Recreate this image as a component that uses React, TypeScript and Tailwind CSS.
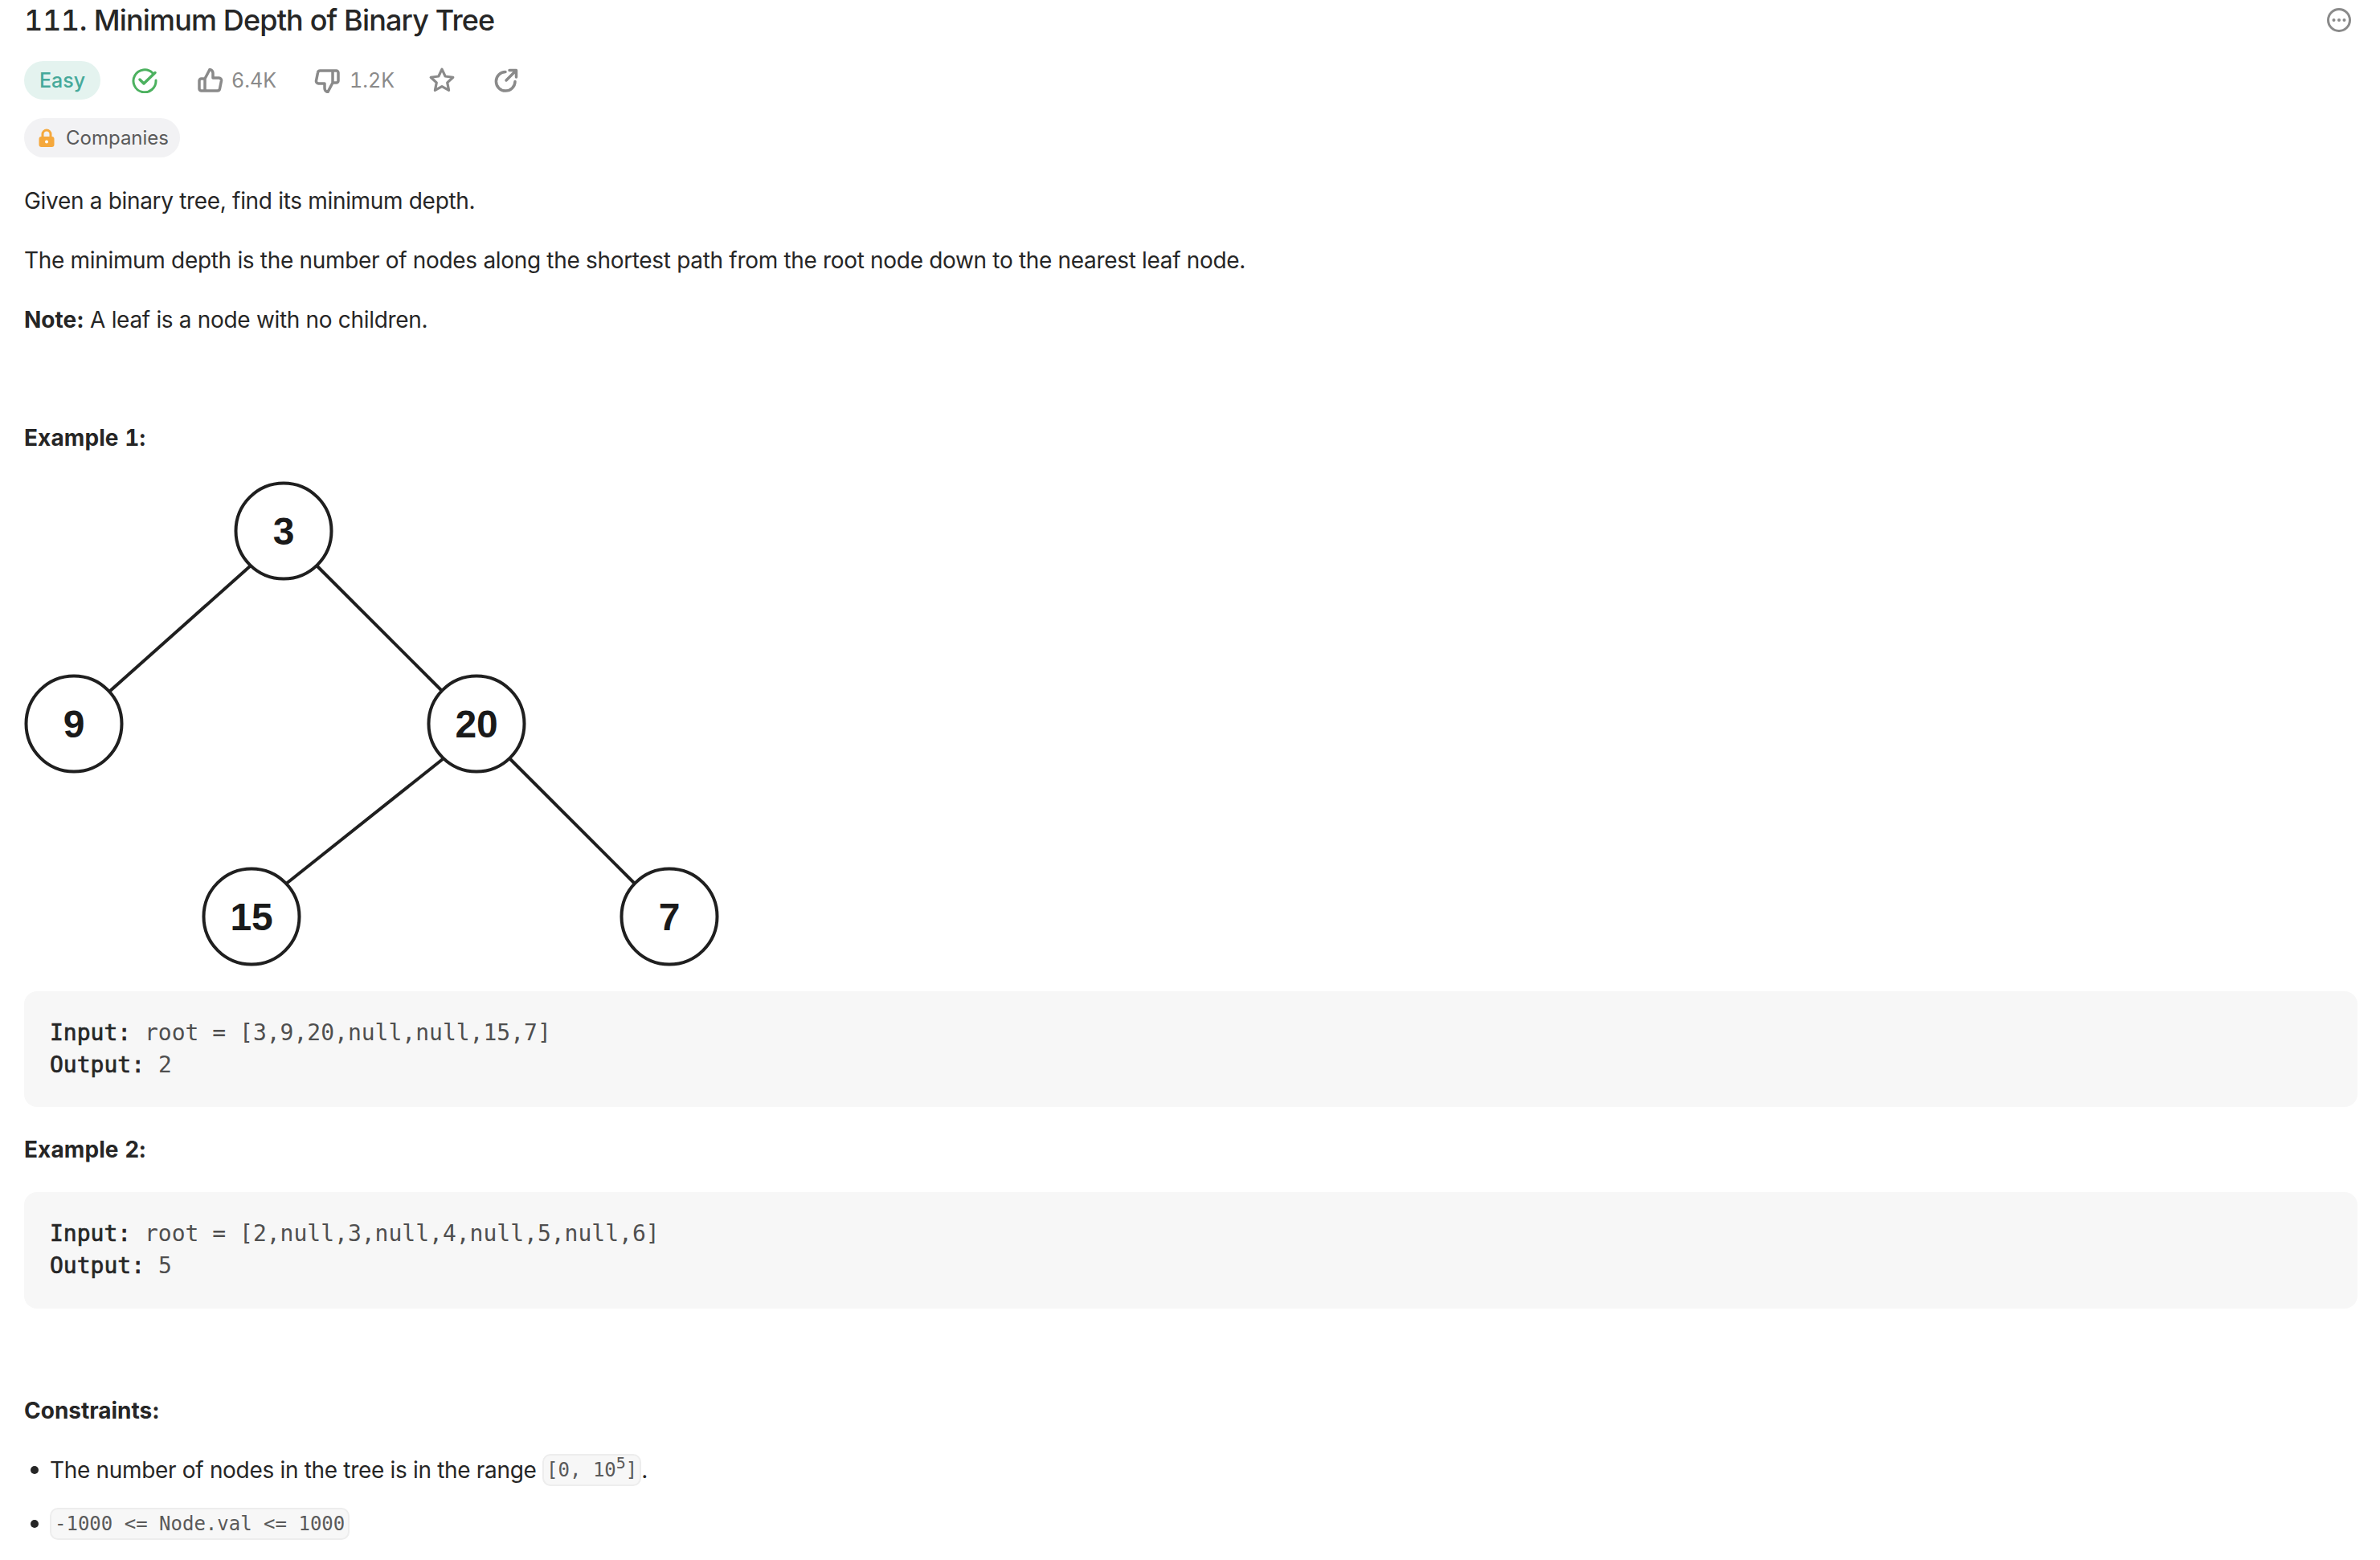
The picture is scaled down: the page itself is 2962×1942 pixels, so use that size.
import React from "react";

const sans = "font-['Inter','Noto_Sans',sans-serif]";

function Code({ label, value }: { label: string; value: string }) {
  return (
    <div>
      <span className="font-normal text-[#262626] [-webkit-text-stroke:0.7px_#262626]">{label}</span>
      <span> {value}</span>
    </div>
  );
}

function Pre({ lines, cls }: { lines: [string, string][]; cls: string }) {
  return (
    <div className={`rounded-[16px] bg-[#f7f7f7] px-[32px] text-[28px] leading-[40px] tracking-normal text-[#4f4f4f] font-['DejaVu_Sans_Mono',monospace] ${cls}`}>
      {lines.map(([a, b]) => (
        <Code key={a} label={a} value={b} />
      ))}
    </div>
  );
}

function Tree() {
  const nodes: [number, number, string][] = [
    [323, 62, "3"],
    [62, 302, "9"],
    [563, 302, "20"],
    [283, 542, "15"],
    [803, 542, "7"],
  ];
  return (
    <svg width="865" height="604" viewBox="0 0 865 604" className="block">
      <g stroke="#1f1f1f" strokeWidth="4" fill="none">
        <line x1="281" y1="106" x2="106" y2="262" />
        <line x1="365" y1="106" x2="521" y2="262" />
        <line x1="521" y1="346" x2="325" y2="502" />
        <line x1="605" y1="346" x2="761" y2="502" />
        {nodes.map(([x, y]) => (
          <circle key={`${x}-${y}`} cx={x} cy={y} r="59.500" fill="#fff" />
        ))}
      </g>
      {nodes.map(([x, y, t]) => (
        <text
          key={t}
          x={x}
          y={y + 17}
          textAnchor="middle"
          fontSize="48"
          fontWeight="700"
          fill="#1a1a1a"
          fontFamily="'Liberation Sans', sans-serif"
        >
          {t}
        </text>
      ))}
    </svg>
  );
}

export default function App() {
  return (
    <div className={`relative h-[1942px] overflow-hidden bg-white pl-[30px] pr-[28px] text-[28px] leading-[42px] tracking-[-0.32px] text-[#262626] ${sans}`}>
      <div className="flex h-[50px] items-center justify-between">
        <h1 className="text-[36px] font-medium leading-[50px] tracking-[-0.85px] text-[#262626]">
          <span className="tabular-nums tracking-[-0.4px]">111.</span> Minimum Depth of Binary Tree
        </h1>
        <svg width="32" height="32" viewBox="0 0 32 32" fill="none" className="mr-[7px]">
          <circle cx="16" cy="16" r="13.500" stroke="#8a8a8a" strokeWidth="3" />
          <circle cx="9.500" cy="16" r="2" fill="#8a8a8a" />
          <circle cx="16" cy="16" r="2" fill="#8a8a8a" />
          <circle cx="22.500" cy="16" r="2" fill="#8a8a8a" />
        </svg>
      </div>

      <div className="mt-[26px] flex h-[48px] items-center text-[25px] tracking-normal tabular-nums text-[#8a8a8a]">
        <span className="flex h-[48px] w-[95px] items-center justify-center rounded-full bg-[#e4f3ef] text-[25px] font-medium text-[#46a99a]">Easy</span>
        <svg width="32" height="32" viewBox="0 0 32 32" fill="none" className="ml-[39px]">
          <path d="M26 7A14 14 0 1 0 30 16" stroke="#4cb15f" strokeWidth="3" strokeLinecap="round" />
          <path d="M10 15l5 5 14-13.500" stroke="#4cb15f" strokeWidth="3.500" strokeLinecap="round" strokeLinejoin="round" />
        </svg>
        <svg width="32" height="30" viewBox="0 0 32 30" fill="none" className="ml-[50px]">
          <path d="M9 28H4.500A2.500 2.500 0 0 1 2 25.500V15.500A2.500 2.500 0 0 1 4.500 13H9m0 15h15.500a3 3 0 0 0 3-2.500l2-10a3 3 0 0 0-3-3.500H19V6a4.500 4.500 0 0 0-4-4.500L9 13z" stroke="#8a8a8a" strokeWidth="3.500" strokeLinejoin="round" />
        </svg>
        <span className="ml-[10px] w-[52px] leading-none">6.4K</span>
        <svg width="32" height="30" viewBox="0 0 32 30" fill="none" className="ml-[51px] translate-y-[1px]">
          <path d="M23 2h4.500A2.500 2.500 0 0 1 30 4.500v10a2.500 2.500 0 0 1-2.500 2.500H23M23 2H7.500a3 3 0 0 0-3 2.500l-2 10a3 3 0 0 0 3 3.500H13v6a4.500 4.500 0 0 0 4 4.500L23 17z" stroke="#8a8a8a" strokeWidth="3.500" strokeLinejoin="round" />
        </svg>
        <span className="ml-[12px] w-[52px] leading-none">1.2K</span>
        <svg width="34" height="34" viewBox="0 0 32 32" fill="none" className="ml-[46px]">
          <path d="M16 3l3.900 8.300 9.100 1.200-6.700 6.200 1.800 9-8.100-4.500-8.100 4.500 1.800-9L3 12.500l9.100-1.200z" stroke="#8a8a8a" strokeWidth="3" strokeLinejoin="round" />
        </svg>
        <svg width="30" height="30" viewBox="0 0 30 30" fill="none" className="ml-[48px]">
          <path d="M14 4.500A11.800 11.800 0 1 0 26 16.500" stroke="#8a8a8a" strokeWidth="3.500" strokeLinecap="round" />
          <path d="M15 15L27 3M19 2.500h8.500V11" stroke="#8a8a8a" strokeWidth="3.500" strokeLinecap="round" strokeLinejoin="round" />
        </svg>
      </div>

      <div className="mt-[23px] flex h-[49px] w-[194px] items-center rounded-full bg-[#f2f2f4] pl-[18px] text-[24px] tracking-normal text-[#5a5a5a]">
        <svg width="20" height="24" viewBox="0 0 20 24" fill="none">
          <path d="M5 11V7a5 5 0 0 1 10 0v4" stroke="#f5a83c" strokeWidth="3" />
          <rect x="0.500" y="10" width="19" height="13" rx="3" fill="#f5a83c" />
          <circle cx="10" cy="16.500" r="2" fill="#fff" />
        </svg>
        <span className="ml-[14px]">Companies</span>
      </div>

      <p className="mt-[33px]">Given a binary tree, find its minimum depth.</p>
      <p className="mt-[32px]">The minimum depth is the number of nodes along the shortest path from the root node down to the nearest leaf node.</p>
      <p className="mt-[32px]"><strong className="font-bold tracking-normal">Note:</strong> A leaf is a node with no children.</p>

      <p className="mt-[105px] font-bold tracking-[0.1px] tabular-nums">Example 1:</p>
      <div className="mt-[33px]"><Tree /></div>
      <Pre cls="mt-[31px] h-[144px] pt-[32px]" lines={[["Input:", "root = [3,9,20,null,null,15,7]"], ["Output:", "2"]]} />
      <p className="mt-[32px] font-bold tracking-[0.1px] tabular-nums">Example 2:</p>
      <Pre cls="mt-[32px] h-[145px] pt-[32px]" lines={[["Input:", "root = [2,null,3,null,4,null,5,null,6]"], ["Output:", "5"]]} />
      <p className="mt-[106px] font-bold tracking-normal">Constraints:</p>

      <ul className="mt-[32px]">
        <li className="flex items-center">
          <span className="ml-[8px] mr-[14px] size-[10px] rounded-full bg-[#262626]" />
          <span className="whitespace-pre">The number of nodes in the tree is in the range </span>
          <code className="rounded-[10px] border-2 border-[#ededed] bg-[#f7f7f7] px-[3px] text-[24px] leading-[36px] tracking-normal text-[#5a5a5a] font-['DejaVu_Sans_Mono',monospace]">[0, 10<sup className="text-[20px] leading-none">5</sup>]</code>
          <span>.</span>
        </li>
        <li className="mt-[26px] flex items-center">
          <span className="ml-[8px] mr-[14px] size-[10px] rounded-full bg-[#262626]" />
          <code className="rounded-[10px] border-2 border-[#ededed] bg-[#f7f7f7] px-[4px] text-[24px] leading-[36px] tracking-normal text-[#5a5a5a] font-['DejaVu_Sans_Mono',monospace]">-1000 &lt;= Node.val &lt;= 1000</code>
        </li>
      </ul>
    </div>
  );
}
